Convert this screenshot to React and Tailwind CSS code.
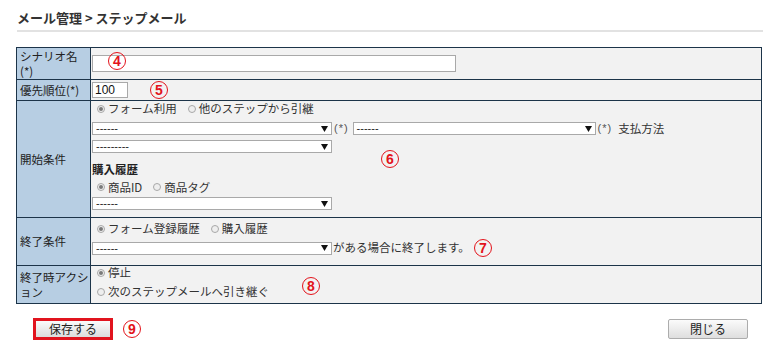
import React from 'react'

const Arrow = () => (
  <svg width="7" height="6" viewBox="0 0 7 6" className="shrink-0">
    <polygon points="0,0 7,0 3.5,6" fill="#111" />
  </svg>
)

const Select = ({ className = 'w-[240px]', text = '------' }) => (
  <div className={`flex h-[13px] items-center justify-between border border-[#a9a9a9] bg-white pl-[3px] pr-[3px] ${className}`}>
    <span className="font-['Liberation_Sans',sans-serif] text-[11px] leading-none text-[#222]">{text}</span>
    <Arrow />
  </div>
)

const Radio = ({ checked, label }) => (
  <label className="flex items-center">
    <span className="flex h-[8px] w-[8px] items-center justify-center rounded-full border border-[#a8a8a8] bg-[#eeeeee]">
      {checked && <span className="h-[4px] w-[4px] rounded-full bg-[#7a7a7a]" />}
    </span>
    <span className="ml-[3px]">{label}</span>
  </label>
)

const Badge = ({ n, className = '' }) => (
  <span
    className={`flex h-[18px] w-[18px] items-center justify-center rounded-full border-[1.5px] border-[#e3131b] font-['Liberation_Sans',sans-serif] text-[14px] font-bold leading-none text-[#e3131b] ${className}`}
  >
    {n}
  </span>
)

const Label = ({ children, className = '' }) => (
  <div className={`flex bg-[#b7cee3] pl-[3px] pr-[1px] leading-[15px] text-[#222] ${className}`}>
    <div>{children}</div>
  </div>
)

const Cell = ({ children, className = '' }) => (
  <div className={`bg-[#f2f2f2] pl-[1px] ${className}`}>{children}</div>
)

export default function App() {
  return (
    <div className="relative h-[346px] w-[771px] overflow-hidden bg-white font-['Noto_Sans_CJK_JP',sans-serif] text-[11.5px] text-[#333]">
      <h1 className="pl-[17px] pt-[10px] text-[13px] font-bold leading-[16px] text-[#333]">
        メール管理 &gt; ステップメール
      </h1>
      <div className="ml-[17px] mt-[4px] h-[2px] w-[746px] bg-[#e2e2e2]" />

      <div className="ml-[16px] mt-[15px] grid w-[746px] grid-cols-[73px_1fr] gap-px border border-[#1c3449] bg-[#1c3449]">
        {/* シナリオ名 */}
        <Label className="items-start pt-[1px]">シナリオ名 (*)</Label>
        <Cell className="flex h-[31px] items-center">
          <div className="h-[17px] w-[364px] border border-[#a9a9a9] bg-white" />
        </Cell>

        {/* 優先順位 */}
        <Label className="items-center">優先順位(*)</Label>
        <Cell className="flex h-[20px] items-center">
          <div className="flex h-[16px] w-[36px] items-center border border-[#a9a9a9] bg-white pl-[2px] font-['Liberation_Sans',sans-serif] text-[12px] text-[#111]">
            100
          </div>
          <Badge n="5" className="ml-[22px]" />
        </Cell>

        {/* 開始条件 */}
        <Label className="items-center">開始条件</Label>
        <Cell className="flex h-[116px] flex-col">
          <div className="flex h-[15px] items-center gap-[11px] pl-[5px]">
            <Radio checked label="フォーム利用" />
            <Radio label="他のステップから引継" />
          </div>
          <div className="mt-[4px] flex items-center">
            <Select className="w-[240px]" />
            <span className="ml-[2px] font-['Liberation_Sans',sans-serif] text-[11px] tracking-[1px] text-[#555]">(*)</span>
            <Select className="ml-[4px] w-[243px]" />
            <span className="ml-[2px] font-['Liberation_Sans',sans-serif] text-[11px] tracking-[1px] text-[#555]">(*)</span>
            <span className="ml-[6px]">支払方法</span>
          </div>
          <Select className="mt-[3px] w-[240px]" text="---------" />
          <div className="mt-[9px] h-[15px] font-bold leading-[15px] text-[#222]">購入履歴</div>
          <div className="mt-[3px] flex h-[14px] items-center gap-[11px] pl-[5px]">
            <Radio checked label="商品ID" />
            <Radio label="商品タグ" />
          </div>
          <Select className="mt-[3px] w-[240px]" />
        </Cell>

        {/* 終了条件 */}
        <Label className="items-center">終了条件</Label>
        <Cell className="flex h-[47px] flex-col pt-[3px]">
          <div className="flex h-[15px] items-center gap-[11px] pl-[5px]">
            <Radio checked label="フォーム登録履歴" />
            <Radio label="購入履歴" />
          </div>
          <div className="mt-[3px] flex items-center">
            <Select className="w-[240px]" />
            <span className="ml-[1px]">がある場合に終了します。</span>
            <Badge n="7" className="ml-[4px]" />
          </div>
        </Cell>

        {/* 終了時アクション */}
        <Label className="items-center">終了時アクション</Label>
        <Cell className="flex h-[37px] flex-col">
          <div className="flex h-[14px] items-center pl-[5px]">
            <Radio checked label="停止" />
          </div>
          <div className="mt-[5px] flex h-[14px] items-center pl-[5px]">
            <Radio label="次のステップメールへ引き継ぐ" />
          </div>
        </Cell>
      </div>

      <div className="mt-[14px] flex items-center justify-between pl-[33px] pr-[23px]">
        <div className="flex items-center">
          <div className="h-[22px] w-[80px] border-[3px] border-[#e1141e]">
            <button className="h-full w-full bg-gradient-to-b from-[#fbfbfb] to-[#dcdcdc] text-[12px] leading-none text-[#222]">
              保存する
            </button>
          </div>
          <Badge n="9" className="ml-[10px]" />
        </div>
        <button className="h-[20px] w-[80px] rounded-[2px] border border-[#acacac] bg-gradient-to-b from-[#fbfbfb] to-[#dedede] text-[12px] leading-none text-[#222]">
          閉じる
        </button>
      </div>

      {/* annotations over the form */}
      <Badge n="4" className="absolute left-[108px] top-[52px]" />
      <Badge n="6" className="absolute left-[381px] top-[150px]" />
      <Badge n="8" className="absolute left-[302px] top-[277px]" />
    </div>
  )
}
